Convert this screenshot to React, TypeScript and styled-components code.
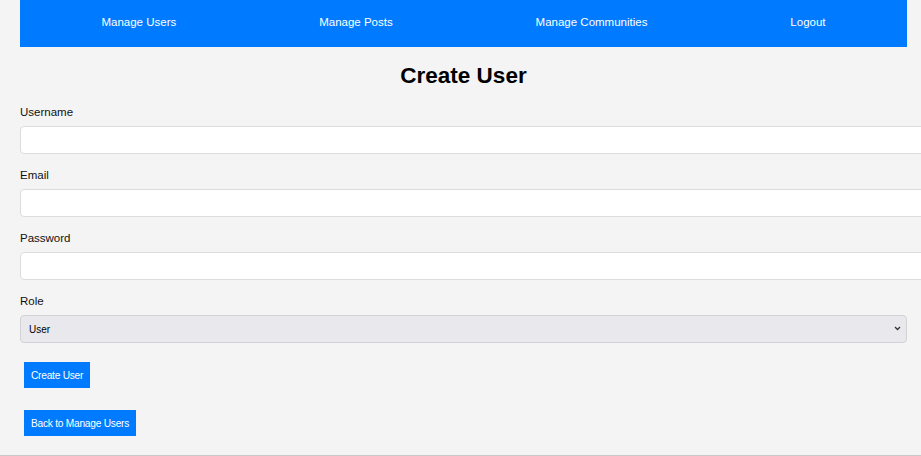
import React from "react";
import styled, { createGlobalStyle } from "styled-components";

const GlobalStyle = createGlobalStyle`
  html, body {
    margin: 0;
    padding: 0;
    background: #f4f4f4;
    overflow: hidden;
  }
  body {
    font-family: "Liberation Sans", Arial, sans-serif;
    color: #111;
  }
`;

const Page = styled.div`
  box-sizing: border-box;
  min-height: 100vh;
  padding: 0 14px 0 20px;
  border-bottom: 1px solid #c9c9c9;
  overflow: hidden;
`;

const NavBar = styled.nav`
  height: 47px;
  box-sizing: border-box;
  padding: 0 10px 3px;
  background: #007bff;
  display: flex;
  justify-content: space-around;
  align-items: center;
`;

const NavLink = styled.a`
  padding: 0 10px;
  color: #ffffff;
  font-size: 11.5px;
  text-decoration: none;
  cursor: pointer;
  &:hover {
    text-decoration: underline;
  }
`;

const Title = styled.h2`
  margin: 16px 0 17px;
  font-size: 22.5px;
  line-height: 26px;
  font-weight: 700;
  text-align: center;
  color: #000;
`;

const Form = styled.form`
  display: flex;
  flex-direction: column;
  align-items: flex-start;
`;

const Field = styled.div`
  width: 100%;
  display: flex;
  flex-direction: column;
  gap: 7px;
  margin-bottom: 15px;
`;

const Label = styled.label`
  font-size: 11.5px;
  line-height: 13px;
  color: #111;
`;

const TextInput = styled.input`
  width: 100%;
  height: 26px;
  padding: 0 8px;
  border: 1px solid #dcdcdc;
  border-radius: 4px;
  background: #ffffff;
  font-family: "Liberation Sans", Arial, sans-serif;
  font-size: 11.5px;
  outline: none;
`;

const SelectWrap = styled.div`
  position: relative;
  width: 100%;
`;

const Select = styled.select`
  appearance: none;
  box-sizing: border-box;
  width: 100%;
  height: 28px;
  padding: 0 8px;
  border: 1px solid #d2d2d6;
  border-radius: 4px;
  background: #e9e9ed;
  font-family: "Liberation Sans", Arial, sans-serif;
  font-size: 10px;
  color: #000;
`;

const Chevron = styled.svg`
  position: absolute;
  right: 6px;
  top: 11px;
  width: 7px;
  height: 5px;
  pointer-events: none;
`;

const Button = styled.button`
  margin: 4px;
  padding: 0 7px;
  height: 26px;
  border: none;
  background: #007bff;
  color: #ffffff;
  font-family: "Liberation Sans", Arial, sans-serif;
  font-size: 10.2px;
  letter-spacing: -0.25px;
  cursor: pointer;
`;

const BackRow = styled.div`
  margin-top: 14px;
`;

const App = () => {
  return (
    <>
      <GlobalStyle />
      <Page>
        <NavBar>
          <NavLink>Manage Users</NavLink>
          <NavLink>Manage Posts</NavLink>
          <NavLink>Manage Communities</NavLink>
          <NavLink>Logout</NavLink>
        </NavBar>
        <Title>Create User</Title>
        <Form onSubmit={(e) => e.preventDefault()}>
          <Field>
            <Label htmlFor="username">Username</Label>
            <TextInput id="username" type="text" />
          </Field>
          <Field>
            <Label htmlFor="email">Email</Label>
            <TextInput id="email" type="email" />
          </Field>
          <Field>
            <Label htmlFor="password">Password</Label>
            <TextInput id="password" type="password" />
          </Field>
          <Field>
            <Label htmlFor="role">Role</Label>
            <SelectWrap>
              <Select id="role" defaultValue="user">
                <option value="user">User</option>
                <option value="admin">Admin</option>
              </Select>
              <Chevron viewBox="0 0 7 5">
                <path d="M1 1 L3.5 3.5 L6 1" fill="none" stroke="#333" strokeWidth="1.3" />
              </Chevron>
            </SelectWrap>
          </Field>
          <Button type="submit">Create User</Button>
        </Form>
        <BackRow>
          <Button type="button">Back to Manage Users</Button>
        </BackRow>
      </Page>
    </>
  );
};

export default App;
